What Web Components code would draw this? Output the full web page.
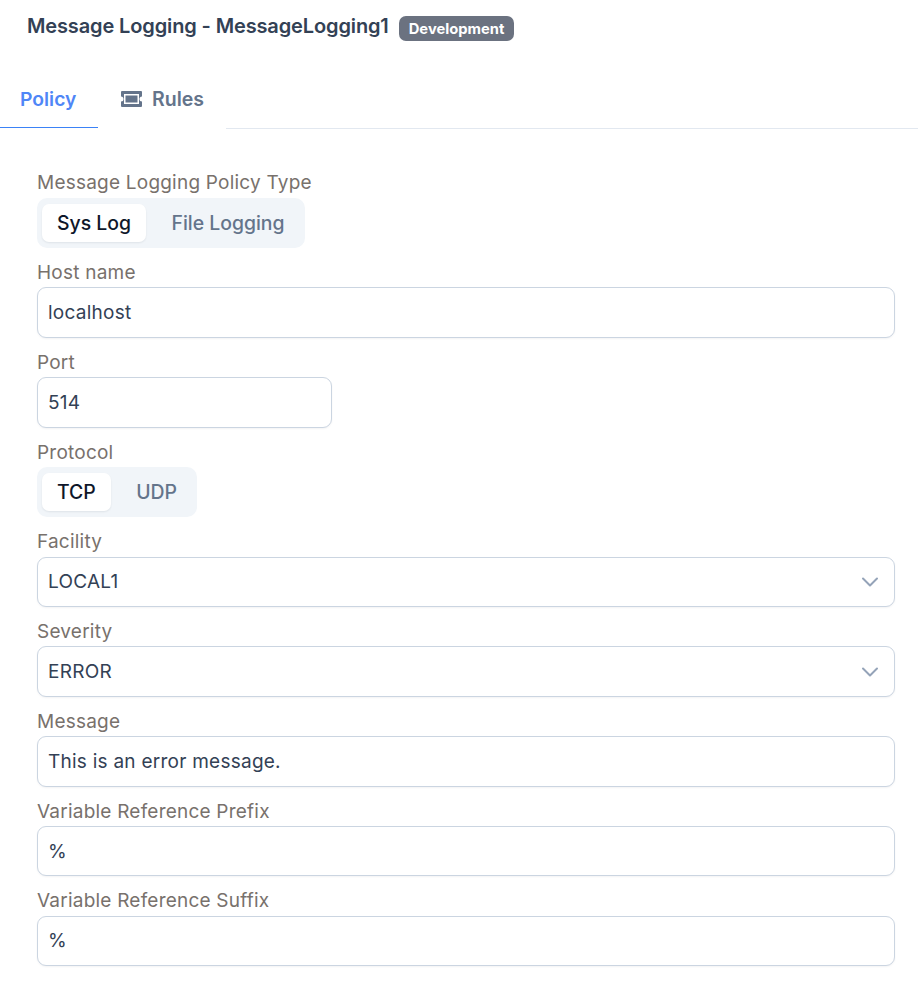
<!DOCTYPE html>
<html>
<head>
<meta charset="utf-8">
<title>Message Logging</title>
<style>
  html, body { margin: 0; padding: 0; background: #fff; }
  body { font-family: Inter, "Liberation Sans", sans-serif; width: 918px; height: 987px; overflow: hidden; }
</style>
</head>
<body>
<policy-page></policy-page>

<template id="tpl-header">
  <style>
    :host { display: flex; align-items: flex-start; gap: 10px; height: 52px; padding-left: 27px; }
    h1 { margin: 12px 0 0; font-size: 20px; line-height: 28px; font-weight: 600; color: #334155; letter-spacing: -0.13px; white-space: nowrap; }
    span { display: inline-flex; align-items: center; height: 25px; margin-top: 16px; padding: 0 10px; border-radius: 7px; background: #6b7280; color: #fff; font-size: 14.75px; font-weight: 700; }
  </style>
  <h1><slot></slot></h1><span><slot name="badge"></slot></span>
</template>

<template id="tpl-tabs">
  <style>
    :host { display: flex; height: 77px; margin-bottom: 39.25px; box-sizing: border-box; }
    .tab { display: flex; align-items: center; gap: 9px; height: 77px; padding: 17px 20px 1px; box-sizing: border-box; font-size: 19.5px; font-weight: 600; color: #64748b; }
    .active { width: 98px; height: 76px; font-size: 19.3px; color: #4f86f7; border-bottom: 1px solid #3b82f6; padding: 20px 20px 1px; }
    .rest { flex: 1; border-bottom: 1px solid #e2e8f0; }
    svg { width: 23px; height: 16px; flex: none; }
    .rules { width: 128px; padding-left: 22px; }
  </style>
  <div class="tab active">Policy</div>
  <div class="tab rules">
    <svg viewBox="0 0 23 16"><path fill="#64748b" fill-rule="evenodd" d="M2 0h19a1 1 0 0 1 1 1v4.5a2.5 2.5 0 0 0 0 5V15a1 1 0 0 1-1 1H2a1 1 0 0 1-1-1v-4.5a2.5 2.5 0 0 0 0-5V1a1 1 0 0 1 1-1zM4 3v10h15V3z"/><rect x="5.5" y="4.5" width="12" height="7" fill="#64748b"/></svg>
    Rules
  </div>
  <div class="rest"></div>
</template>

<template id="tpl-field">
  <style>
    :host { display: block; }
    label { display: block; height: 27px; padding-top: 1px; margin-bottom: 1.25px; font-size: 19px; letter-spacing: .22px; line-height: 28px; color: #78716c; }
  </style>
  <label></label>
  <slot></slot>
</template>

<template id="tpl-input">
  <style>
    :host { display: flex; align-items: center; justify-content: space-between; box-sizing: border-box; height: 50.5px; padding: 0 10px; border: 1px solid #cbd5e1; border-radius: 9px; background: #fff; font-size: 19px; letter-spacing: .25px; color: #334155; box-shadow: 0 1px 2px rgba(15,23,42,.05); }
    svg { width: 20px; height: 20px; margin-right: 4px; }
  </style>
  <slot></slot>
  <svg viewBox="0 0 20 20" fill="none" stroke="#94a3b8" stroke-width="2" stroke-linecap="round" stroke-linejoin="round"><path d="M3 6.5l7 7 7-7"/></svg>
</template>

<template id="tpl-segmented">
  <style>
    :host { display: inline-flex; gap: 10.5px; box-sizing: border-box; height: 50.5px; padding: 6px 5px; border-radius: 10px; background: #f1f5f9; font-size: 19.4px; }
  </style>
  <slot></slot>
</template>

<template id="tpl-segment">
  <style>
    :host { display: flex; align-items: center; padding: 0 15px; border-radius: 7px; font-weight: 450; color: #64748b; }
    :host([selected]) { background: #fff; color: #0f172a; box-shadow: 0 1px 2px rgba(15,23,42,.08); }
  </style>
  <slot></slot>
</template>

<template id="tpl-page">
  <style>
    :host { display: block; }
    .form { display: flex; flex-direction: column; gap: 10px; padding: 0 23px 0 37px; }
    .form > .narrow { width: 295px; }
  </style>
  <policy-header>Message Logging - MessageLogging1<span slot="badge">Development</span></policy-header>
  <policy-tabs></policy-tabs>
  <div class="form">
    <form-field label="Message Logging Policy Type"><seg-group><seg-item selected>Sys Log</seg-item><seg-item>File Logging</seg-item></seg-group></form-field>
    <form-field label="Host name"><text-box>localhost</text-box></form-field>
    <form-field label="Port" class="narrow"><text-box>514</text-box></form-field>
    <form-field label="Protocol"><seg-group><seg-item selected>TCP</seg-item><seg-item>UDP</seg-item></seg-group></form-field>
    <form-field label="Facility"><text-box select>LOCAL1</text-box></form-field>
    <form-field label="Severity"><text-box select>ERROR</text-box></form-field>
    <form-field label="Message"><text-box>This is an error message.</text-box></form-field>
    <form-field label="Variable Reference Prefix"><text-box>%</text-box></form-field>
    <form-field label="Variable Reference Suffix"><text-box>%</text-box></form-field>
  </div>
</template>

<script>
  // petit helper : shadow root ouvert depuis un <template>
  function stamp(el, id) {
    const root = el.attachShadow({ mode: 'open' });
    root.appendChild(document.getElementById(id).content.cloneNode(true));
    return root;
  }

  class PolicyHeader extends HTMLElement {
    constructor() { super(); stamp(this, 'tpl-header'); }
  }
  class PolicyTabs extends HTMLElement {
    constructor() { super(); stamp(this, 'tpl-tabs'); }
  }
  class FormField extends HTMLElement {
    constructor() { super(); this._root = stamp(this, 'tpl-field'); }
    connectedCallback() { this._root.querySelector('label').textContent = this.getAttribute('label'); }
  }
  class TextBox extends HTMLElement {
    constructor() { super(); this._root = stamp(this, 'tpl-input'); }
    connectedCallback() {
      if (!this.hasAttribute('select')) this._root.querySelector('svg').remove();
    }
  }
  class SegGroup extends HTMLElement {
    constructor() { super(); stamp(this, 'tpl-segmented'); }
  }
  class SegItem extends HTMLElement {
    constructor() { super(); stamp(this, 'tpl-segment'); }
  }
  class PolicyPage extends HTMLElement {
    constructor() { super(); stamp(this, 'tpl-page'); }
  }

  customElements.define('policy-header', PolicyHeader);
  customElements.define('policy-tabs', PolicyTabs);
  customElements.define('form-field', FormField);
  customElements.define('text-box', TextBox);
  customElements.define('seg-group', SegGroup);
  customElements.define('seg-item', SegItem);
  customElements.define('policy-page', PolicyPage);
</script>
</body>
</html>
